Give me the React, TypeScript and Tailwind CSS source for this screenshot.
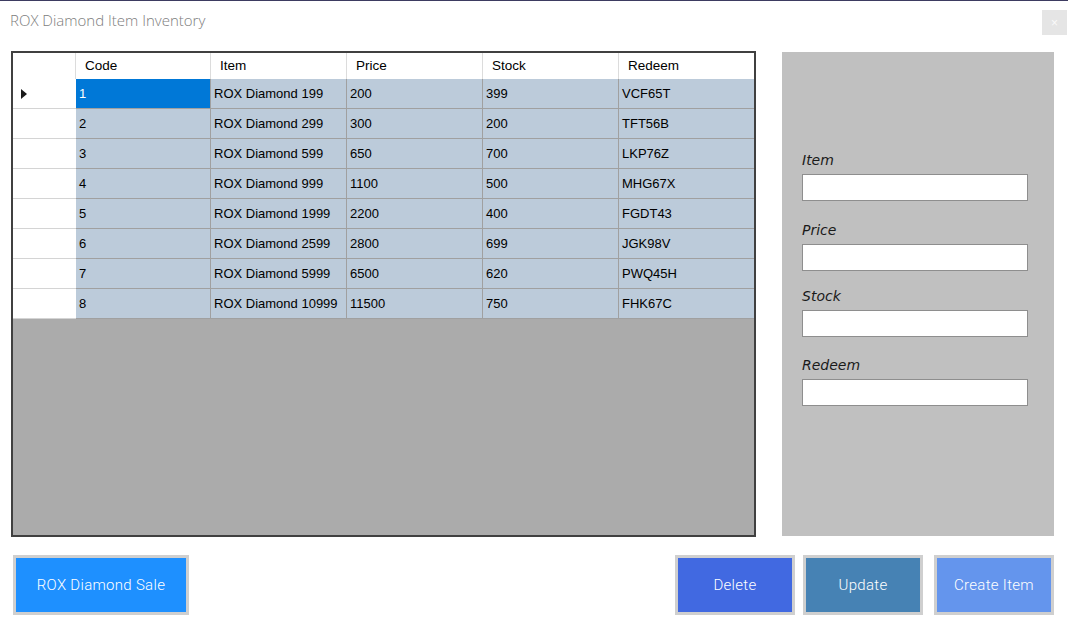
import React from 'react'

// Inventário de itens ROX Diamond
const ITENS = [
  { code: '1', item: 'ROX Diamond 199', price: '200', stock: '399', redeem: 'VCF65T' },
  { code: '2', item: 'ROX Diamond 299', price: '300', stock: '200', redeem: 'TFT56B' },
  { code: '3', item: 'ROX Diamond 599', price: '650', stock: '700', redeem: 'LKP76Z' },
  { code: '4', item: 'ROX Diamond 999', price: '1100', stock: '500', redeem: 'MHG67X' },
  { code: '5', item: 'ROX Diamond 1999', price: '2200', stock: '400', redeem: 'FGDT43' },
  { code: '6', item: 'ROX Diamond 2599', price: '2800', stock: '699', redeem: 'JGK98V' },
  { code: '7', item: 'ROX Diamond 5999', price: '6500', stock: '620', redeem: 'PWQ45H' },
  { code: '8', item: 'ROX Diamond 10999', price: '11500', stock: '750', redeem: 'FHK67C' },
]

const COLUNAS = ['Code', 'Item', 'Price', 'Stock', 'Redeem']
const GRID_COLS = 'grid grid-cols-[63px_135px_136px_136px_136px_135px]'

function Campo({ rotulo, className }: { rotulo: string; className: string }) {
  return (
    <div className={className}>
      <div className="h-[20px] leading-[20px] italic text-[14px] text-[#1a1a1a] font-['DejaVu_Sans',sans-serif]">
        {rotulo}
      </div>
      <input className="block w-[226px] h-[27px] bg-white border border-[#8e8e8e] outline-none mt-[4px]" />
    </div>
  )
}

function Botao({ texto, cor, largura }: { texto: string; cor: string; largura: string }) {
  return (
    <button
      className={`${largura} h-[60px] border-[3px] border-[#cfcfcf] ${cor} text-white text-[15px] font-light font-['Roboto',sans-serif] tracking-[0.3px]`}
    >
      {texto}
    </button>
  )
}

export default function App() {
  return (
    <div className="w-[1068px] h-[629px] bg-white overflow-hidden flex flex-col font-['Liberation_Sans',Arial,sans-serif]">
      <div className="h-px bg-[#3d3b61]" />

      {/* Título + fechar */}
      <div className="flex items-start justify-between pl-[10px] pr-[1px] pt-[9px] h-[50px]">
        <span className="text-[15px] leading-[20px] font-light text-[#7d7d7d] font-['Open_Sans',sans-serif]">
          ROX Diamond Item Inventory
        </span>
        <div className="w-[25px] h-[25px] bg-[#e5e5e5] flex items-center justify-center text-[12px] text-[#fafafa]">
          ×
        </div>
      </div>

      <div className="flex pl-[11px] gap-[26px]">
        {/* Grade de dados */}
        <div className="w-[745px] h-[486px] border-2 border-[#404040] bg-[#ababab] text-[13px] text-black">
          <div className={`${GRID_COLS} h-[26px] bg-white`}>
            <div className="border-r border-[#dcdcdc]" />
            {COLUNAS.map((c, i) => (
              <div
                key={c}
                className={`pl-[9px] leading-[26px] text-[13.5px] ${i < COLUNAS.length - 1 ? 'border-r border-[#dcdcdc]' : ''}`}
              >
                {c}
              </div>
            ))}
          </div>
          {ITENS.map((r, idx) => (
            <div key={r.code} className={`${GRID_COLS} h-[30px]`}>
              <div className="bg-white border-b border-[#d4d4d4] flex items-center pl-[8px]">
                {idx === 0 && (
                  <svg width="6" height="10" viewBox="0 0 6 10">
                    <path d="M0 0 L6 5 L0 10 Z" fill="#1a1a1a" />
                  </svg>
                )}
              </div>
              {[r.code, r.item, r.price, r.stock, r.redeem].map((v, i) => (
                <div
                  key={i}
                  className={`pl-[3px] leading-[29px] border-b border-[#a0a0a0] ${i < 4 ? 'border-r' : ''} ${
                    idx === 0 && i === 0 ? 'bg-[#0078d7] text-white' : 'bg-[#bccbda]'
                  }`}
                >
                  {v}
                </div>
              ))}
            </div>
          ))}
        </div>

        {/* Painel do formulário */}
        <div className="mt-px w-[272px] h-[484px] bg-[#c0c0c0] pl-[20px] pt-[98px]">
          <Campo rotulo="Item" className="" />
          <Campo rotulo="Price" className="mt-[19px]" />
          <Campo rotulo="Stock" className="mt-[15px]" />
          <Campo rotulo="Redeem" className="mt-[18px]" />
        </div>
      </div>

      {/* Botões */}
      <div className="flex items-start mt-[18px] pl-[13px] pr-[14px]">
        <Botao texto="ROX Diamond Sale" cor="bg-[#1e90ff]" largura="w-[176px]" />
        <div className="ml-auto flex">
          <Botao texto="Delete" cor="bg-[#4169e1]" largura="w-[120px]" />
          <div className="w-[8px]" />
          <Botao texto="Update" cor="bg-[#4682b4]" largura="w-[120px]" />
          <div className="w-[11px]" />
          <Botao texto="Create Item" cor="bg-[#6495ed]" largura="w-[120px]" />
        </div>
      </div>
    </div>
  )
}
